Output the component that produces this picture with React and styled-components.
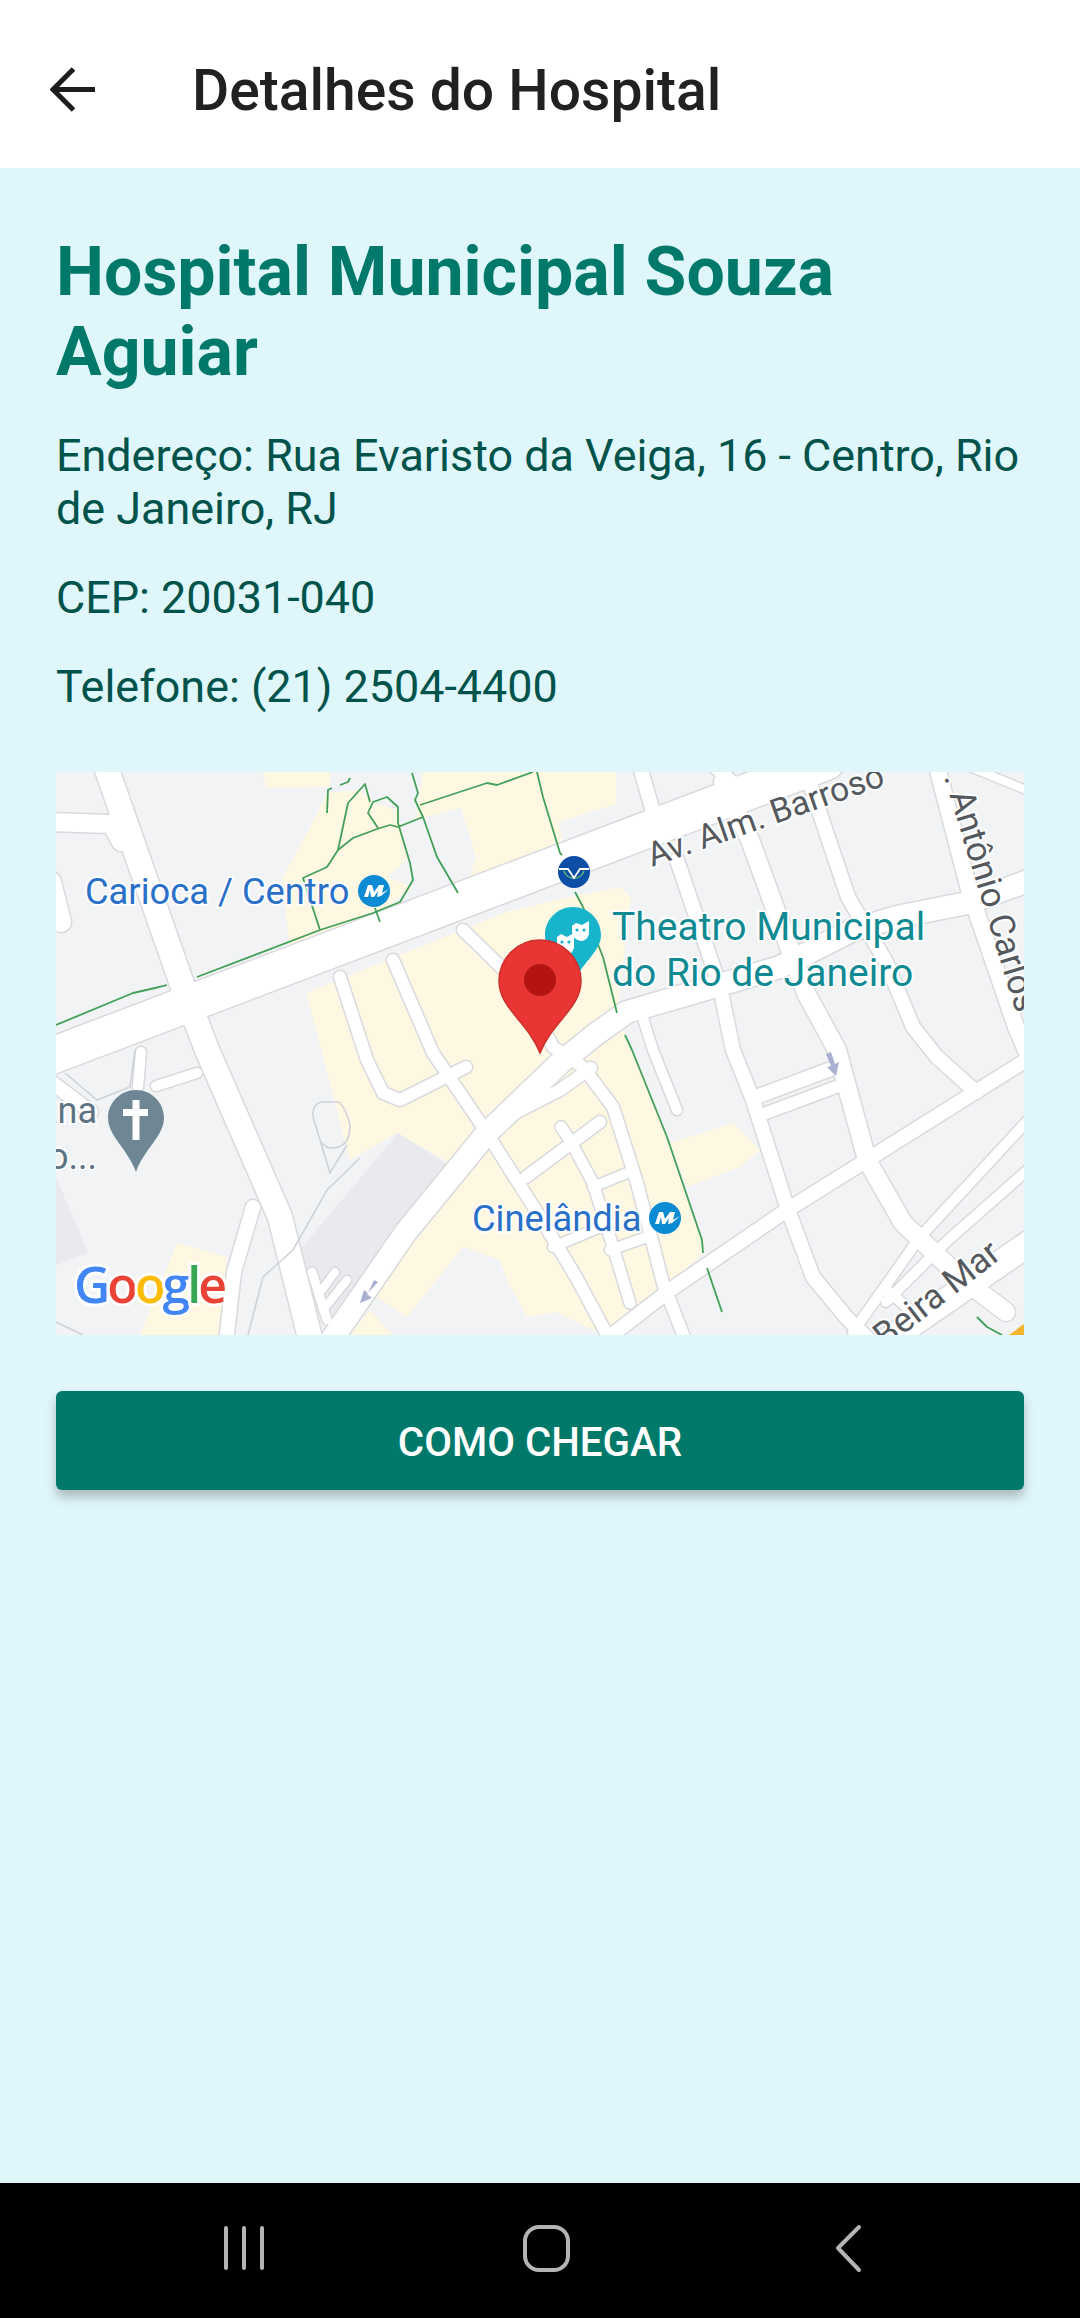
import React from "react";
import styled, { createGlobalStyle } from "styled-components";

const GlobalStyle = createGlobalStyle`
  * { box-sizing: border-box; }
  html, body { margin: 0; padding: 0; }
  body { font-family: Roboto, "Noto Sans", sans-serif; background: #e0f7fa; }
`;

const Screen = styled.div`
  width: 1080px;
  height: 2318px;
  display: flex;
  flex-direction: column;
  overflow: hidden;
`;

const AppBar = styled.header`
  height: 168px;
  flex-shrink: 0;
  background: #fff;
  display: flex;
  align-items: center;
  padding: 10px 0 0 50px;
  gap: 96px;
`;

const BackIcon = styled.svg`
  width: 47px;
  height: 47px;
  flex-shrink: 0;
  fill: none;
  stroke: #1d1d1f;
  stroke-width: 5;
`;

const BarTitle = styled.h1`
  margin: 0 0 0 -1px;
  padding-top: 2px;
  font-size: 57px;
  font-weight: 500;
  color: #212121;
`;

const Content = styled.main`
  flex: 1;
  background: #dff6fa;
  padding: 64px 56px 0;
`;

const HospitalName = styled.h2`
  margin: 0 0 37px;
  font-size: 68px;
  line-height: 80px;
  font-weight: 700;
  color: #00796b;
`;

const Info = styled.p`
  margin: 0 0 36px;
  font-size: 44.9px;
  line-height: 53px;
  color: #00534a;
`;

const MapFrame = styled.svg`
  display: block;
  width: 968px;
  height: 563px;
  margin-top: 59px;
  background: #f1f3f4;
  font-family: Roboto, sans-serif;
`;

const Casing = styled.polyline`
  fill: none;
  stroke: #d8dadd;
  stroke-linecap: round;
  stroke-linejoin: round;
`;

const Lane = styled.polyline`
  fill: none;
  stroke: #fff;
  stroke-linecap: round;
  stroke-linejoin: round;
`;

const Footpath = styled.path`
  fill: none;
  stroke: #cfd2d6;
  stroke-width: 1.6;
`;

const Bikeway = styled.polyline`
  fill: none;
  stroke: #43a05a;
  stroke-width: 1.8;
  stroke-linejoin: round;
`;

const Label = styled.text`
  font-size: ${(p) => p.$size || 34}px;
  fill: ${(p) => p.$color};
  stroke: #fff;
  stroke-width: 4px;
  stroke-opacity: 0.85;
  paint-order: stroke;
`;

const GoogleMark = styled(Label)`
  font-family: "Open Sans", sans-serif;
  font-weight: 600;
  stroke-width: 6px;
`;

const RouteButton = styled.button`
  display: block;
  width: 968px;
  height: 99px;
  margin-top: 56px;
  padding: 3px 0 0;
  border: 0;
  border-radius: 6px;
  background: #00796b;
  color: #fff;
  font-family: Roboto, sans-serif;
  font-size: 40.3px;
  font-weight: 500;
  box-shadow: 0 7px 11px rgba(0, 0, 0, 0.24);
`;

const NavBar = styled.nav`
  height: 135px;
  flex-shrink: 0;
  background: #000;
`;

const NavIcons = styled.svg`
  display: block;
  width: 1080px;
  height: 135px;
  fill: none;
  stroke: #b4b4b4;
  stroke-width: 4;
  stroke-linecap: round;
  stroke-linejoin: round;
`;

const beige = [
  "250,221 450,140 500,128 564,115 575,125 561,241 576,278 611,365 646,468 647,481 606,519 547,563 500,540 471,545 451,508 444,488 407,475 351,545 321,525 394,391 341,361 294,388 274,311",
  "271,21 304,18 317,31 342,38 351,88 331,105 357,115 317,145 234,185 227,105 251,61",
  "367,0 560,0 560,32 502,50 512,90 410,115 420,85 405,36 360,48",
  "207,0 274,0 274,15 210,16",
  "614,371 677,351 704,378 684,395 631,415",
  "84,563 121,471 171,485 164,563",
  "294,563 314,538 337,563",
];

const buildings = [
  "244,478 342,361 392,393 374,418 274,551",
  "0,405 32,481 0,493",
];

const roads = [
  [36, "-10,286 464,106 770,-10"],
  [24, "50,-5 127,215 151,278 224,445 255,570"],
  [14, "197,435 178,500 170,570"],
  [18, "-5,50 55,52 65,70"],
  [20, "-5,110 5,150"],
  [14, "-5,310 35,340"],
  [10, "85,280 82,315"],
  [10, "100,314 141,301"],
  [22, "274,570 350,460 431,361 504,291 540,262 571,240 650,217 724,195 797,158 841,145 911,131 975,108"],
  [12, "284,205 311,288 327,321 344,328 384,308 410,295"],
  [12, "337,188 377,281 427,355 484,445 520,505 555,570"],
  [12, "407,158 451,201 470,222 497,275 527,295 557,335 581,411 607,511 630,570"],
  [12, "441,350 504,318 535,296"],
  [12, "470,405 544,350"],
  [11, "505,355 514,368 537,411 557,475 574,531"],
  [10, "537,415 571,401"],
  [10, "554,478 591,465"],
  [10, "497,475 554,451"],
  [10, "585,240 597,278 621,338"],
  [14, "621,88 664,215 677,278 697,328 731,435 757,505 790,545 815,570"],
  [18, "667,10 694,68 750,221 781,278 811,388 847,451 904,505 950,540"],
  [14, "755,15 792,125 830,190 857,255 881,285 920,320"],
  [16, "881,-5 914,121 960,255 975,290"],
  [14, "547,570 614,518 731,438 811,388 975,285"],
  [14, "700,325 775,297"],
  [12, "705,343 780,315"],
  [10, "797,560 864,465 975,345"],
  [10, "830,530 890,470 975,395"],
  [25, "830,570 975,470"],
  [10, "831,518 854,538"],
  [14, "584,-5 600,50"],
  [14, "660,-5 690,25"],
  [8, "914,-5 975,20"],
  [9, "256,500 271,548"],
  [8, "279,500 266,518"],
  [8, "291,508 267,538"],
];

const bikeways = [
  "0,253 77,221 99,216 111,213",
  "141,205 264,158 317,141 344,130 357,108 354,91 342,51 342,35 331,25 317,30 312,41 322,56",
  "264,158 247,106 271,95 282,78 292,31 309,12 314,30",
  "282,78 297,66 321,57 334,53 342,55 367,45 381,85 402,121",
  "319,136 324,150",
  "356,1 362,21 359,28 367,45",
  "364,33 431,11 441,13 477,0",
  "481,0 487,25 504,81 506,83",
  "519,120 527,135 547,185 561,241",
  "569,263 576,278 611,365 646,468 647,481",
  "651,496 666,540",
  "921,545 931,555 946,563",
  "271,41 272,18 276,16",
  "284,13 292,10 294,6",
];

const MetroBadge = ({ x, y }) => (
  <g transform={`translate(${x} ${y})`}>
    <circle r="16" fill="#0b8bd3" />
    <path d="M-10 6 L-6 -6 L-2 -6 L0 1 L5 -6 L10 -6 L8 2 L15 -2 L7 5 L3 6 L4 0 L0 6 L-3 6 L-4 -1 L-6 6 Z" fill="#fff" />
  </g>
);

const HospitalMap = () => (
  <MapFrame viewBox="0 0 968 563">
    {beige.map((p) => (
      <polygon key={p} points={p} fill="#fef7e2" />
    ))}
    {buildings.map((p) => (
      <polygon key={p} points={p} fill="#e8eaed" />
    ))}
    {roads.map(([w, p]) => (
      <Casing key={p} points={p} strokeWidth={w + 3} />
    ))}
    {roads.map(([w, p]) => (
      <Lane key={p} points={p} strokeWidth={w} />
    ))}
    <Footpath d="M304 386 L271 418 L237 478 L207 505 L192 563" />
    <Footpath d="M264 368 L274 401 L291 373 M264 368 L257 345 Q256 330 268 330 L283 330 Q291 338 294 353 Q294 376 276 376 Q268 376 264 368" />
    <Footpath d="M9 301 L41 328 L74 315 L79 278 M0 550 L27 563" />
    {bikeways.map((p) => (
      <Bikeway key={p} points={p} />
    ))}
    <polygon points="953,563 968,552 968,563" fill="#f5b52e" />

    <polygon points="322,510 311,522 316,526 304,531 308,518 312,521 318,508" fill="#aab0d2" />
    <polygon points="770,282 775,280 779,292 783,290 780,304 771,295 775,294" fill="#aab0d2" />

    <Label x="29" y="132" $color="#2a70c8" $size="36.3">Carioca / Centro</Label>
    <MetroBadge x={318} y={119} />
    <Label x="416" y="459" $color="#2a70c8" $size="36.3">Cinelândia</Label>
    <MetroBadge x={609} y={446} />
    <Label x="556" y="168" $color="#0f8a93" $size="39">Theatro Municipal</Label>
    <Label x="556" y="214" $color="#0f8a93" $size="39">do Rio de Janeiro</Label>
    <Label x="596" y="95" $color="#55595e" $size="33.8" transform="rotate(-19.3 596 95)">Av. Alm. Barroso</Label>
    <Label x="888" y="5" $color="#55595e" $size="35" transform="rotate(73 888 5)">. Antônio Carlos</Label>
    <Label x="829" y="577" $color="#55595e" $size="35" transform="rotate(-38 829 577)">Beira Mar</Label>
    <Label x="41" y="351" $color="#5b7382" $size="36" textAnchor="end">na</Label>
    <Label x="41" y="397" $color="#5b7382" $size="36" textAnchor="end">o...</Label>

    <path d="M80 318 C64.5 318 52 330.5 52 346 C52 364 72 377 80 400 C88 377 108 364 108 346 C108 330.5 95.5 318 80 318 Z" fill="#6f8795" />
    <path d="M76.5 328 H83.5 V337 H92 V344 H83.5 V368 H76.5 V344 H67 V337 H76.5 Z" fill="#fff" />

    <g transform="translate(518 100)">
      <circle r="16" fill="#0d4ea6" />
      <path d="M-10 -1 A10.5 10.5 0 0 0 10 -1" fill="none" stroke="#6ec26b" strokeWidth="1.4" />
      <path d="M-15 -3 H-6 L0 6 L6 -3 H15" fill="none" stroke="#fff" strokeWidth="1.8" />
    </g>

    <path d="M517 135 C501.5 135 489 147.5 489 163 C489 180 508 192 516 214 C524 192 545 180 545 163 C545 147.5 532.5 135 517 135 Z" fill="#17b4cc" />
    <path d="M516 154 L520 151 L526 153 L533 149 L533 162 Q531 169 525 169 Q517 168 516 160 Z" fill="#fff" />
    <circle cx="521" cy="158" r="1.6" fill="#17b4cc" />
    <circle cx="528" cy="158" r="1.6" fill="#17b4cc" />
    <path d="M501 165 L505 162 L511 165 L518 161 L518 176 Q515 184 508 184 Q501 182 501 174 Z" fill="#fff" />
    <circle cx="506" cy="170" r="1.6" fill="#17b4cc" />
    <circle cx="513" cy="170" r="1.6" fill="#17b4cc" />

    <path d="M484 168 C461.5 168 443 186.5 443 209 C443 236 472 250 484 281 C496 250 525 236 525 209 C525 186.5 506.5 168 484 168 Z" fill="#ea3535" stroke="#c9302c" strokeWidth="1.5" />
    <circle cx="484" cy="208" r="16" fill="#b31412" />

    <GoogleMark x="18" y="531" $size="50" $color="#4285f4" textLength="153">
      G<tspan fill="#ea4335">o</tspan>
      <tspan fill="#fbbc05">o</tspan>
      <tspan fill="#4285f4">g</tspan>
      <tspan fill="#34a853">l</tspan>
      <tspan fill="#ea4335">e</tspan>
    </GoogleMark>
  </MapFrame>
);

export default function App() {
  return (
    <Screen>
      <GlobalStyle />
      <AppBar>
        <BackIcon viewBox="0 0 47 47">
          <path d="M45 23.5 H4 M23.5 3 L3 23.5 L23.5 44" />
        </BackIcon>
        <BarTitle>Detalhes do Hospital</BarTitle>
      </AppBar>
      <Content>
        <HospitalName>Hospital Municipal Souza Aguiar</HospitalName>
        <Info>Endereço: Rua Evaristo da Veiga, 16 - Centro, Rio de Janeiro, RJ</Info>
        <Info>CEP: 20031-040</Info>
        <Info>Telefone: (21) 2504-4400</Info>
        <HospitalMap />
        <RouteButton>COMO CHEGAR</RouteButton>
      </Content>
      <NavBar>
        <NavIcons viewBox="0 0 1080 135">
          <path d="M226 45 V85 M244 45 V85 M262 45 V85" />
          <rect x="525" y="44" width="43" height="43" rx="14" />
          <path d="M859 44 L838 65 L859 87" />
        </NavIcons>
      </NavBar>
    </Screen>
  );
}
